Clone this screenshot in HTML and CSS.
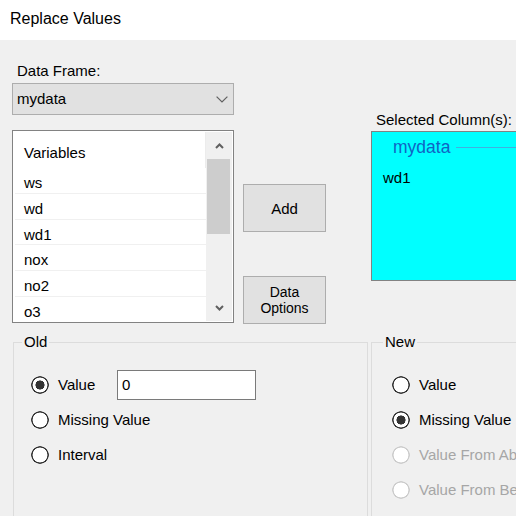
FILE: index.html
```html
<!DOCTYPE html>
<html lang="en">
<head>
<meta charset="utf-8">
<title>Replace Values</title>
<link rel="stylesheet" href="styles.css">
</head>
<body>
<div class="titlebar">Replace Values</div>
<div class="dialog">
  <div class="top">
    <div class="col-left">
      <div class="label">Data Frame:</div>
      <div class="combo">
        <span>mydata</span>
        <svg class="chev" width="12" height="7" viewBox="0 0 12 7"><path d="M0.6 0.6 L6 6 L11.4 0.6" fill="none" stroke="#606060" stroke-width="1.2"/></svg>
      </div>
      <div class="listbox">
        <div class="list">
          <div class="list-head">Variables</div>
          <div class="row">ws</div>
          <div class="row">wd</div>
          <div class="row">wd1</div>
          <div class="row">nox</div>
          <div class="row">no2</div>
          <div class="row">o3</div>
        </div>
        <div class="scrollbar">
          <div class="arrow"><svg width="9" height="6" viewBox="0 0 9 6"><path d="M1 5 L4.5 1.5 L8 5" fill="none" stroke="#606060" stroke-width="2"/></svg></div>
          <div class="thumb"></div>
          <div class="track"></div>
          <div class="arrow"><svg width="9" height="6" viewBox="0 0 9 6"><path d="M1 1 L4.5 4.5 L8 1" fill="none" stroke="#606060" stroke-width="2"/></svg></div>
        </div>
      </div>
    </div>
    <div class="col-mid">
      <button class="btn btn-add" type="button">Add</button>
      <button class="btn btn-opt" type="button">Data<br>Options</button>
    </div>
    <div class="col-right">
      <div class="label">Selected Column(s):</div>
      <div class="selbox">
        <div class="group-head"><span class="group-name">mydata</span><span class="group-rule"></span></div>
        <div class="sel-item">wd1</div>
      </div>
    </div>
  </div>
  <div class="bottom">
    <fieldset class="group old">
      <legend>Old</legend>
      <div class="opt"><span class="radio on"></span><span class="opt-label w-value">Value</span><input class="textbox" type="text" value="0"></div>
      <div class="opt"><span class="radio"></span><span class="opt-label">Missing Value</span></div>
      <div class="opt"><span class="radio"></span><span class="opt-label">Interval</span></div>
    </fieldset>
    <fieldset class="group new">
      <legend>New</legend>
      <div class="opt"><span class="radio"></span><span class="opt-label">Value</span></div>
      <div class="opt"><span class="radio on"></span><span class="opt-label">Missing Value</span></div>
      <div class="opt disabled"><span class="radio"></span><span class="opt-label">Value From Above</span></div>
      <div class="opt disabled"><span class="radio"></span><span class="opt-label">Value From Below</span></div>
    </fieldset>
  </div>
</div>
</body>
</html>
```
FILE: styles.css
```css
html, body {
  margin: 0;
  padding: 0;
  overflow: hidden;
  background: #f0f0f0;
  width: 516px;
  height: 516px;
}
body {
  font-family: "Liberation Sans", Arial, sans-serif;
  font-size: 15px;
  line-height: 18px;
  color: #000;
}
.titlebar {
  height: 40px;
  box-sizing: border-box;
  background: #fff;
  padding: 10px 0 0 10px;
  font-size: 16px;
}
.dialog {
  width: 640px;
  padding-left: 12px;
}
.top {
  display: flex;
  align-items: flex-start;
}
.col-left {
  width: 222px;
  margin-top: 22px;
  flex: none;
}
.label {
  height: 18px;
  margin-bottom: 3px;
  white-space: nowrap;
  padding-left: 5px;
}
.combo {
  height: 32px;
  box-sizing: border-box;
  border: 1px solid #adadad;
  background: #e1e1e1;
  display: flex;
  align-items: center;
  justify-content: space-between;
  padding: 0 5px 0 4px;
}
.chev { display: block; }
.listbox {
  margin-top: 15px;
  height: 193px;
  box-sizing: border-box;
  border: 1px solid #828282;
  background: #fff;
  padding: 1px 1px 1px 2px;
  display: flex;
}
.list {
  flex: 1;
  overflow: hidden;
}
.list-head {
  height: 36px;
  box-sizing: border-box;
  padding: 12px 0 0 9px;
  border-right: 1px solid #ececec;
}
.row {
  height: 25.75px;
  box-sizing: border-box;
  border-bottom: 1px solid #f0f0f0;
  padding: 6px 0 0 9px;
}
.scrollbar {
  width: 26px;
  flex: none;
  background: #f0f0f0;
  display: flex;
  flex-direction: column;
}
.arrow {
  height: 27px;
  display: flex;
  align-items: center;
  justify-content: center;
}
.arrow svg { display: block; }
.thumb {
  height: 75px;
  margin: 0 2px 0 1px;
  background: #cdcdcd;
}
.track { flex: 1; }
.col-mid {
  width: 83px;
  flex: none;
  margin: 144px 0 0 9px;
  display: flex;
  flex-direction: column;
}
.btn {
  width: 83px;
  height: 48px;
  box-sizing: border-box;
  background: #e1e1e1;
  border: 1px solid #adadad;
  padding: 0;
  font-family: inherit;
  font-size: 15px;
  color: #000;
}
.btn-opt {
  margin-top: 44px;
  font-size: 14px;
  line-height: 16px;
}
.col-right {
  width: 220px;
  flex: none;
  margin: 71px 0 0 45px;
}
.col-right .label { padding-left: 5px; margin-bottom: 2px; }
.selbox {
  height: 150px;
  box-sizing: border-box;
  border: 1px solid #828282;
  background: #00ffff;
}
.group-head {
  margin-top: 5px;
  height: 20px;
  display: flex;
  align-items: center;
  padding-left: 21px;
}
.group-name {
  font-size: 17.5px;
  line-height: 20px;
  color: #1064c4;
}
.group-rule {
  flex: 1;
  height: 1px;
  margin: 0 0 0 6px;
  background: #40b0e0;
}
.sel-item {
  margin-top: 12px;
  padding-left: 11px;
}
.bottom {
  display: flex;
  align-items: flex-start;
  margin-top: 9px;
}
.group {
  margin: 0;
  border: 1px solid #dcdcdc;
  height: 240px;
  box-sizing: border-box;
  min-width: 0;
}
.group legend {
  padding: 0 2px;
  margin-left: -9px;
  line-height: 18px;
}
.old {
  width: 355px;
  margin-left: 1px;
  padding: 16px 0 0 17px;
}
.new {
  width: 200px;
  margin-left: 3px;
  padding: 16px 0 0 20px;
}
.opt {
  display: flex;
  align-items: center;
  height: 35px;
  white-space: nowrap;
}
.radio {
  width: 18px;
  height: 18px;
  flex: none;
  border-radius: 50%;
  background: radial-gradient(circle closest-side, #fff 0 7.2px, #333 7.7px 8.6px, rgba(51,51,51,0) 9.1px);
}
.radio.on {
  background: radial-gradient(circle closest-side, #333 0 4.3px, #fff 4.8px 7.2px, #333 7.7px 8.6px, rgba(51,51,51,0) 9.1px);
}
.opt-label { margin-left: 9px; }
.w-value { width: 59px; flex: none; }
.textbox {
  width: 139px;
  height: 30px;
  box-sizing: border-box;
  border: 1px solid #7a7a7a;
  background: #fff;
  padding: 0 4px;
  margin: 0;
  font-family: inherit;
  font-size: 15px;
  color: #000;
  outline: none;
}
.disabled .opt-label { color: #a6a6a6; }
.disabled .radio {
  background: radial-gradient(circle closest-side, #fff 0 7.2px, #cccccc 7.7px 8.6px, rgba(204,204,204,0) 9.1px);
}
```
